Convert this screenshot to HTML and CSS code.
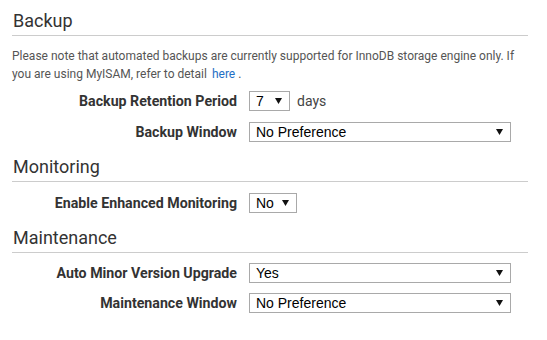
FILE: index.html
```html
<!DOCTYPE html>
<html lang="en">
  <head>
    <meta charset="UTF-8" />
    <title>Database Options</title>
    <link rel="stylesheet" href="styles.css">
  </head>
  <body>
    <!-- Backup -->
    <div class="section">
      <h2>Backup</h2>
      <p class="note">
        Please note that automated backups are currently supported for InnoDB storage engine only. If
        you are using MyISAM, refer to detail<a href="#">here</a><span class="dot">.</span>
      </p>
      <div class="form-row">
        <label>Backup Retention Period</label>
        <div class="select select-tiny">
          <span>7</span>
          <svg class="arrow" width="7" height="6" viewBox="0 0 7 6"><path d="M0 0H7L3.5 6Z" /></svg>
        </div>
        <span class="unit">days</span>
      </div>
      <div class="form-row">
        <label>Backup Window</label>
        <div class="select select-wide">
          <span>No Preference</span>
          <svg class="arrow" width="7" height="6" viewBox="0 0 7 6"><path d="M0 0H7L3.5 6Z" /></svg>
        </div>
      </div>
    </div>

    <!-- Monitoring -->
    <div class="section">
      <h2>Monitoring</h2>
      <div class="form-row">
        <label>Enable Enhanced Monitoring</label>
        <div class="select select-small">
          <span>No</span>
          <svg class="arrow" width="7" height="6" viewBox="0 0 7 6"><path d="M0 0H7L3.5 6Z" /></svg>
        </div>
      </div>
    </div>

    <!-- Maintenance -->
    <div class="section maintenance">
      <h2>Maintenance</h2>
      <div class="form-row">
        <label>Auto Minor Version Upgrade</label>
        <div class="select select-wide">
          <span>Yes</span>
          <svg class="arrow" width="7" height="6" viewBox="0 0 7 6"><path d="M0 0H7L3.5 6Z" /></svg>
        </div>
      </div>
      <div class="form-row">
        <label>Maintenance Window</label>
        <div class="select select-wide">
          <span>No Preference</span>
          <svg class="arrow" width="7" height="6" viewBox="0 0 7 6"><path d="M0 0H7L3.5 6Z" /></svg>
        </div>
      </div>
    </div>
  </body>
</html>
```

FILE: styles.css
```css
/* Global Styles */
body {
  font-family: Roboto, "Open Sans", sans-serif;
  margin: 0;
  padding: 0 19px 0 12px;
  background-color: #ffffff;
  color: #333;
}

.section {
  margin-top: 4px;
}

.section:first-child {
  margin-top: 0;
}

.section h2 {
  margin: 0;
  padding: 9px 0 2px 1px;
  font-size: 18px;
  font-weight: 400;
  line-height: 24px;
  color: #333;
  border-bottom: 1px solid #cccccc;
}

.note {
  margin: 11px 0 0;
  font-size: 12px;
  line-height: 18px;
  color: #555;
}

.note a {
  margin-left: 5px;
  color: #1f6fc5;
  text-decoration: none;
}

.note .dot {
  margin-left: 3px;
}

/* Form rows */
.form-row {
  display: flex;
  align-items: center;
  height: 20px;
  margin-top: 11px;
}

.note + .form-row {
  margin-top: 8px;
}

.maintenance .form-row {
  margin-top: 10px;
}

.form-row label {
  width: 225px;
  margin-right: 12px;
  text-align: right;
  font-size: 14.2px;
  font-weight: 700;
  color: #333;
}

.select {
  display: flex;
  align-items: center;
  justify-content: space-between;
  height: 20px;
  box-sizing: border-box;
  padding: 0 7px 0 6px;
  border: 1px solid #a9a9a9;
  background-color: #fff;
  font-family: "Liberation Sans", Arial, sans-serif;
  font-size: 14px;
  color: #000;
}

.select .arrow {
  fill: #111;
}

.select-tiny {
  width: 41px;
}

.select-small {
  width: 48px;
}

.select-wide {
  width: 262px;
}

.unit {
  margin-left: 7px;
  font-size: 14px;
  color: #444;
}
```
